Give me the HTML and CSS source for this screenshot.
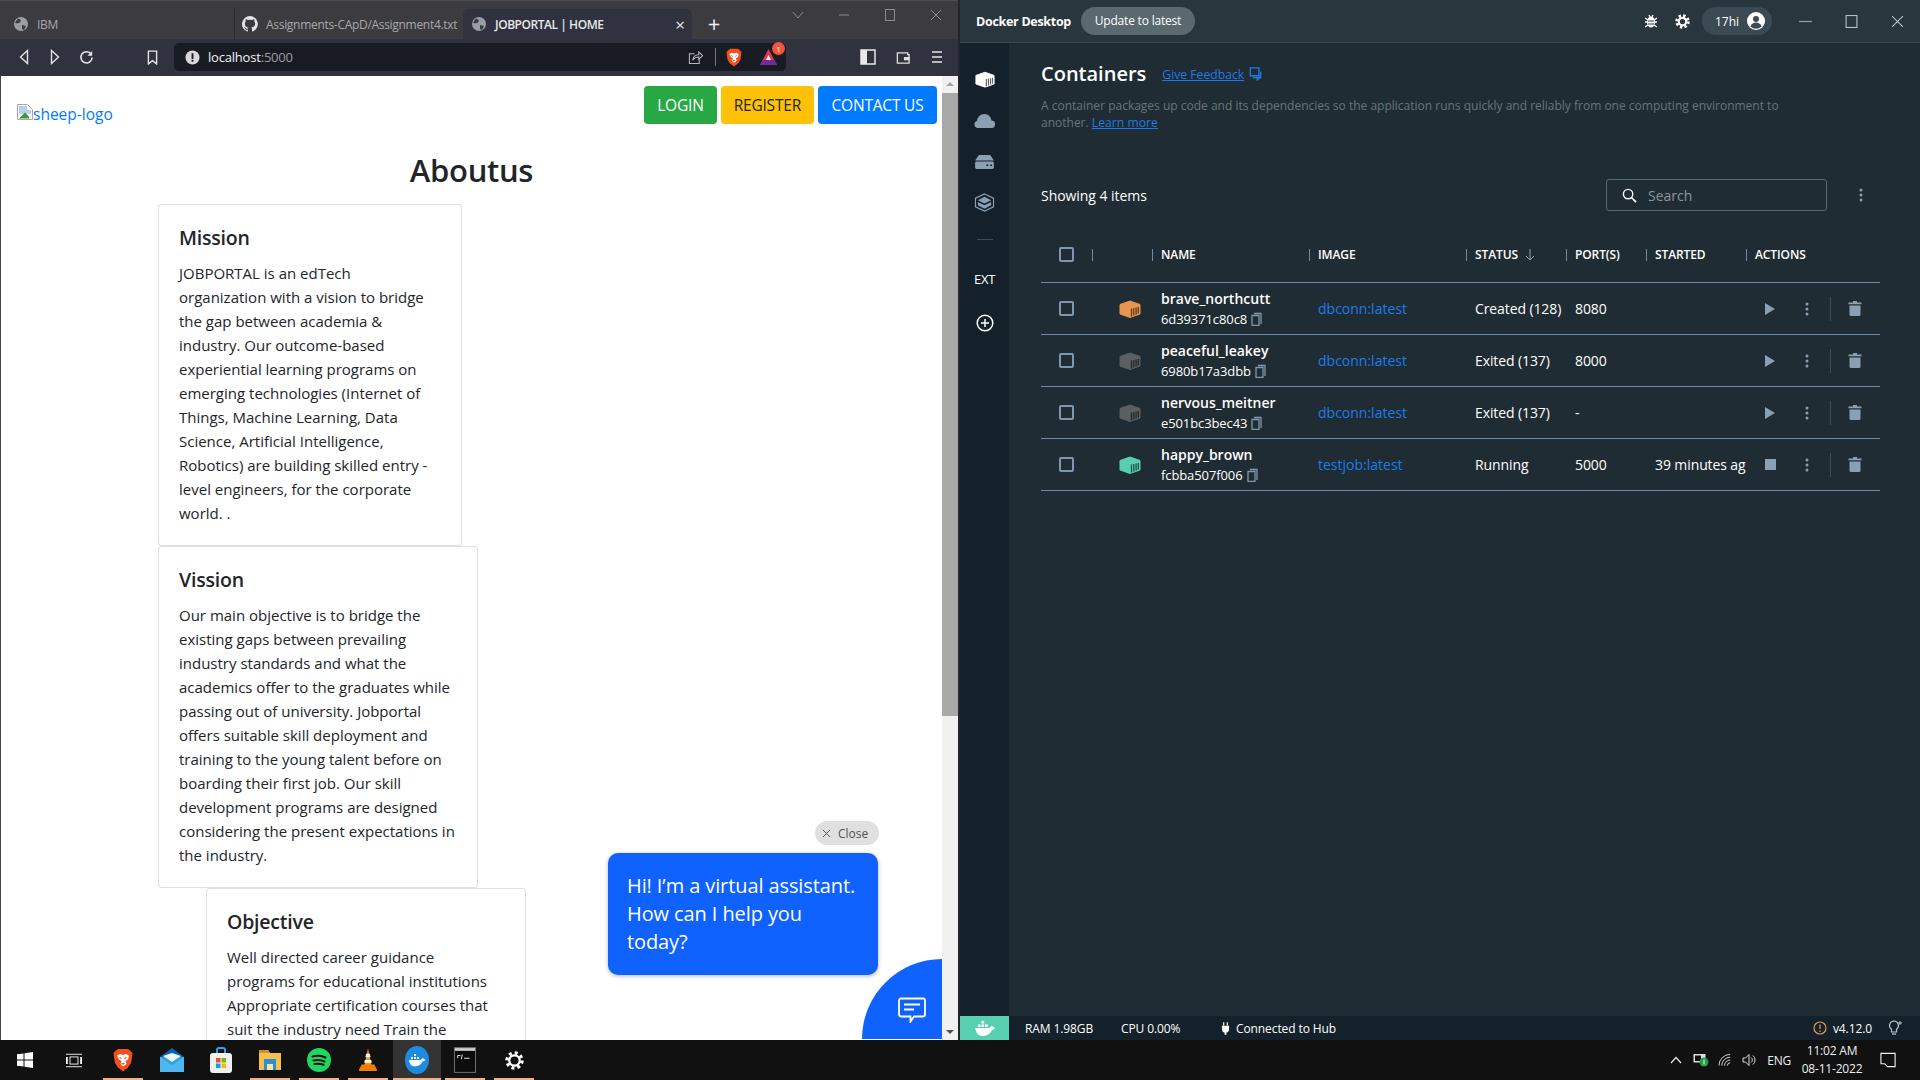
FILE: index.html
```html
<!DOCTYPE html>
<html lang="en">
<head>
<meta charset="utf-8">
<title>Desktop</title>
<link rel="stylesheet" href="styles.css">
</head>
<body>
<svg class="defs" width="0" height="0" aria-hidden="true">
  <symbol id="cube" viewBox="0 0 22 18"><polygon points="11,1 21,4.500 21,14 11,17.500 1,14 1,4.500" fill="currentColor" stroke="currentColor" stroke-width="1" stroke-linejoin="round"/><path d="M12.500 8.500v8M14.800 8v7.500M17.100 7.500v7M19.300 7v6.500" stroke="#000" stroke-opacity=".6" stroke-width="1.300"/></symbol>
  <symbol id="copy" viewBox="0 0 11 14"><path d="M3 1.500h7v10.500M1 3.500h7v10H1z" fill="none" stroke="#7f97ad" stroke-width="1.300"/></symbol>
  <symbol id="trash" viewBox="0 0 14 15"><path d="M5 0h4v1.500h4.500v1.800H.5V1.500H5zM1.500 4.500h11V13.500a1.500 1.500 0 0 1-1.500 1.500H3a1.500 1.500 0 0 1-1.500-1.500z" fill="#8ba0b3"/></symbol>
  <symbol id="play" viewBox="0 0 10 12"><polygon points="0,0 10,6 0,12" fill="#8ba0b3"/></symbol>
  <symbol id="kebab" viewBox="0 0 4 14"><circle cx="2" cy="2" r="1.500" fill="#8ba0b3"/><circle cx="2" cy="7" r="1.500" fill="#8ba0b3"/><circle cx="2" cy="12" r="1.500" fill="#8ba0b3"/></symbol>
  <symbol id="globe" viewBox="0 0 16 16"><circle cx="8" cy="8" r="7" fill="#9a9da3"/><path d="M5 2.500l3 1.500-1 2.500-3 1-2-1zM9 9l4 1-2 4-2-1z" fill="#3c3c41"/></symbol>
  <symbol id="whale" viewBox="0 0 24 18"><path d="M1 9h16.500c.5-2 2-2.500 3-2 .5 1 1.500 1.500 3 1.500-1 2-2.500 2.500-3.500 2.500C18.500 15 14.500 18 9.500 18 4 18 1.500 14 1 9z" fill="#fff"/><path d="M4 5h3v3H4zM8 5h3v3H8zM12 5h3v3h-3zM8 1h3v3H8z" fill="#fff"/></symbol>
  <symbol id="brave" viewBox="0 0 20 24"><path d="M5 1h10l2 1.500L19.500 5 19 9l-1 6-3 4.500L10 23.500 5 19.500 2 15 1 9 .5 5 3 2.500z" fill="#f1501d"/><path d="M4 7.500l3-1.500 3 1 3-1 3 1.500-1 4-2.500 1.500 1 3L10 18.500 7.500 16l1-3L6 11.500z" fill="#fff"/><path d="M8 15h4l-2 2z" fill="#f1501d"/><path d="M6.500 9.500l2 1M13.500 9.500l-2 1" stroke="#f1501d" stroke-width="1.200"/></symbol>
</svg>

<div class="desktop">
  <section class="browser">
    <div class="tabstrip">
      <div class="tab tab-ibm"><svg class="fav"><use href="#globe"/></svg><span>IBM</span></div>
      <div class="tab tab-gh">
        <svg class="fav" viewBox="0 0 16 16"><path fill="#e6e6e6" d="M8 0a8 8 0 0 0-2.500 15.600c.4.1.5-.2.500-.4v-1.400c-2.200.5-2.700-1-2.700-1-.4-.9-.9-1.200-.9-1.200-.7-.5.100-.5.100-.5.800.1 1.200.8 1.200.8.700 1.200 1.900.9 2.300.7.100-.5.300-.9.500-1.100-1.800-.2-3.600-.9-3.600-4 0-.9.300-1.600.8-2.100-.1-.2-.4-1 .1-2.100 0 0 .7-.2 2.200.8a7.600 7.600 0 0 1 4 0c1.500-1 2.200-.8 2.200-.8.400 1.100.2 1.900.1 2.100.5.600.8 1.300.8 2.100 0 3.100-1.900 3.700-3.700 3.900.3.300.6.800.6 1.500v2.200c0 .2.100.5.600.4A8 8 0 0 0 8 0z"/></svg>
        <span>Assignments-CApD/Assignment4.txt</span>
      </div>
      <div class="tab tab-active"><svg class="fav"><use href="#globe"/></svg><span>JOBPORTAL | HOME</span><b class="tab-x">×</b></div>
      <div class="tab-new">+</div>
      <div class="win-ctrl">
        <svg viewBox="0 0 12 8" class="wc wc-chev"><path d="M1 1l5 6 5-6" fill="none" stroke="#8b8b8f"/></svg>
        <svg viewBox="0 0 12 12" class="wc"><path d="M1 6h10" stroke="#8b8b8f"/></svg>
        <svg viewBox="0 0 12 12" class="wc"><rect x="1.500" y=".5" width="9" height="11" fill="none" stroke="#8b8b8f"/></svg>
        <svg viewBox="0 0 12 12" class="wc"><path d="M1 1l10 10M11 1L1 11" stroke="#8b8b8f"/></svg>
      </div>
    </div>
    <div class="toolbar">
      <div class="tb"><svg viewBox="0 0 10 16" width="10" height="16"><path d="M8.500 1.500L1.500 8l7 6.500z" fill="none" stroke="#e4e4e6" stroke-width="1.400"/></svg></div>
      <div class="tb tb-next"><svg viewBox="0 0 10 16" width="10" height="16"><path d="M1.500 1.500L8.500 8l-7 6.500z" fill="none" stroke="#e4e4e6" stroke-width="1.400"/></svg></div>
      <div class="tb tb-next"><svg viewBox="0 0 16 16" width="15" height="15"><path d="M13 4.500A6 6 0 1 0 14 8" fill="none" stroke="#e4e4e6" stroke-width="1.700"/><path d="M14 1v5H9z" fill="#e4e4e6"/></svg></div>
      <div class="tb tb-mark"><svg viewBox="0 0 12 16" width="11" height="15"><path d="M1.500 1h9v14L6 11.500 1.500 15z" fill="none" stroke="#e4e4e6" stroke-width="1.500"/></svg></div>
      <div class="address">
        <svg viewBox="0 0 16 16" width="15" height="15"><circle cx="8" cy="8" r="7.500" fill="#d8d8da"/><rect x="7" y="3.500" width="2" height="6" fill="#191b22"/><rect x="7" y="10.500" width="2" height="2" fill="#191b22"/></svg>
        <span class="url"><b>localhost</b>:5000</span>
        <svg class="addr-share" viewBox="0 0 16 16" width="15" height="15"><path d="M7 4H1.500v10.500H12V10M5 11c.5-4 3-6 6.500-6V2L15.500 6 11.500 10V7.500c-3 0-5 1-6.500 3.500z" fill="none" stroke="#b8b8bc" stroke-width="1.100"/></svg>
        <i class="addr-div"></i>
        <svg class="addr-brave" width="16" height="19"><use href="#brave"/></svg>
        <span class="addr-rew">
          <svg viewBox="0 0 18 18" width="19" height="18"><polygon points="9,1 17.500,17 .5,17" fill="#e8334a"/><polygon points="3.200,12 14.800,12 17.500,17 .5,17" fill="#6b2d9b"/><polygon points="9,7 11.500,12 6.500,12" fill="#fff"/></svg>
          <em class="badge">1</em>
        </span>
      </div>
      <div class="tb tb-side"><svg viewBox="0 0 16 16" width="16" height="16"><rect x="1" y="1" width="14" height="14" fill="none" stroke="#e8e8ea" stroke-width="1.500"/><rect x="1" y="1" width="6" height="14" fill="#e8e8ea"/></svg></div>
      <div class="tb tb-wallet"><svg viewBox="0 0 16 16" width="16" height="15"><path d="M2 3h11v2H14.500v9H2z" fill="none" stroke="#e0e0e2" stroke-width="1.400"/><rect x="9" y="7.500" width="6" height="3.500" fill="#e0e0e2"/></svg></div>
      <div class="tb tb-menu"><svg viewBox="0 0 12 14" width="12" height="14"><path d="M1 2h10M1 7h10M1 12h10" stroke="#e4e4e6" stroke-width="1.600"/></svg></div>
    </div>
    <div class="viewport">
      <div class="page">
        <nav class="site-nav">
          <a class="logo" href="#"><svg viewBox="0 0 16 16" width="16" height="16"><path d="M.5.500h10l5 5v10H.5z" fill="#fff" stroke="#a8a8a8"/><path d="M2 2h8v4h4v4H2z" fill="#b9cfee"/><path d="M2 14.500l6-6 4 4v2z" fill="#3f9a35"/></svg><span>sheep-logo</span></a>
          <div class="site-actions">
            <a class="btn btn-green" href="#">LOGIN</a>
            <a class="btn btn-yellow" href="#">REGISTER</a>
            <a class="btn btn-blue" href="#">CONTACT US</a>
          </div>
        </nav>
        <h1 class="about-title">Aboutus</h1>
        <article class="card card-mission">
          <h2>Mission</h2>
          <p>JOBPORTAL is an edTech<br>organization with a vision to bridge<br>the gap between academia &amp;<br>industry. Our outcome-based<br>experiential learning programs on<br>emerging technologies (Internet of<br>Things, Machine Learning, Data<br>Science, Artificial Intelligence,<br>Robotics) are building skilled entry -<br>level engineers, for the corporate<br>world. .</p>
        </article>
        <article class="card card-vision">
          <h2>Vission</h2>
          <p>Our main objective is to bridge the<br>existing gaps between prevailing<br>industry standards and what the<br>academics offer to the graduates while<br>passing out of university. Jobportal<br>offers suitable skill deployment and<br>training to the young talent before on<br>boarding their first job. Our skill<br>development programs are designed<br>considering the present expectations in<br>the industry.</p>
        </article>
        <article class="card card-objective">
          <h2>Objective</h2>
          <p>Well directed career guidance<br>programs for educational institutions<br>Appropriate certification courses that<br>suit the industry need Train the<br>trainers to meet the demand</p>
        </article>
        <div class="chat-close"><svg viewBox="0 0 10 10" width="9" height="9"><path d="M1 1l8 8M9 1L1 9" stroke="#444" stroke-width="1"/></svg><span>Close</span></div>
        <div class="chat-bubble">Hi! I’m a virtual assistant. How can I help you today?</div>
        <div class="chat-launcher"><svg viewBox="0 0 28 26" width="28" height="26"><path d="M3 1.500h22a2 2 0 0 1 2 2v14a2 2 0 0 1-2 2H16l-3.500 5v-5H3a2 2 0 0 1-2-2v-14a2 2 0 0 1 2-2z" fill="none" stroke="#fff" stroke-width="1.800"/><path d="M6 7.500h16M6 12.500h10" stroke="#fff" stroke-width="1.800"/></svg></div>
      </div>
      <div class="scrollbar">
        <span class="sb-arrow sb-up"></span>
        <span class="sb-thumb"></span>
        <span class="sb-arrow sb-down"></span>
      </div>
    </div>
  </section>

  <section class="docker">
    <header class="dk-top">
      <strong class="dk-brand">Docker Desktop</strong>
      <span class="dk-update">Update to latest</span>
      <svg class="dk-bug" viewBox="0 0 12 14" width="12" height="14"><ellipse cx="6" cy="8" rx="4" ry="5.500" fill="#fff"/><path d="M0 4l3 2M12 4L9 6M0 8h3M12 8H9M0 13l3-2M12 13l-3-2M4 1l1 2M8 1L7 3" stroke="#fff" stroke-width="1.300"/><path d="M3 7h6M3 10h6" stroke="#2a363e"/></svg>
      <svg class="dk-gear" viewBox="0 0 16 16" width="15" height="15"><circle cx="8" cy="8" r="6.200" fill="none" stroke="#fff" stroke-width="3" stroke-dasharray="2.500 2.370"/><circle cx="8" cy="8" r="4" fill="none" stroke="#fff" stroke-width="2.400"/></svg>
      <div class="dk-user"><span>17hi</span><svg viewBox="0 0 18 18" width="18" height="18"><circle cx="9" cy="9" r="9" fill="#fff"/><circle cx="9" cy="7" r="3" fill="#3c4a54"/><path d="M3.500 14.500c1-3 3-4 5.500-4s4.500 1 5.500 4a8 8 0 0 1-11 0z" fill="#3c4a54"/></svg></div>
      <div class="dk-win">
        <svg viewBox="0 0 12 12" width="13" height="13"><path d="M0 6h12" stroke="#8d9aa3" stroke-width="1.200"/></svg>
        <svg viewBox="0 0 12 12" width="13" height="13"><rect x="1" y=".5" width="10" height="11" fill="none" stroke="#b8c1c7"/></svg>
        <svg viewBox="0 0 12 12" width="13" height="13"><path d="M1 1l10 10M11 1L1 11" stroke="#b8c1c7"/></svg>
      </div>
    </header>
    <div class="dk-body">
      <aside class="dk-side">
        <div class="sd-slot"><svg viewBox="0 0 22 18" width="20" height="17" color="#fff"><use href="#cube"/></svg></div>
        <div class="sd-slot"><svg viewBox="0 0 22 16" width="21" height="15"><path d="M4 16a4 4 0 0 1-1-7.800C3.500 4 6.500 1 11 1c4 0 7 3 7.500 7A4 4 0 0 1 18 16z" fill="#8ba0b3"/></svg></div>
        <div class="sd-slot"><svg viewBox="0 0 22 16" width="21" height="15"><path d="M5 1h12l4 6H1z" fill="#8ba0b3"/><rect x="1" y="8" width="20" height="8" rx="1.500" fill="#8ba0b3"/><path d="M13 12h2M17 12h2" stroke="#14212a" stroke-width="1.500"/></svg></div>
        <div class="sd-slot"><svg viewBox="0 0 22 20" width="21" height="19"><path d="M11 1l9.500 4.500v9L11 19l-9.500-4.500v-9z" fill="none" stroke="#8ba0b3" stroke-width="1.200"/><path d="M11 4l7 3.500-7 3.500-7-3.500z" fill="#8ba0b3"/><path d="M4 9.500l7 3.500 7-3.500v3.500l-7 3.500-7-3.500z" fill="#8ba0b3"/></svg></div>
        <i class="sd-div"></i>
        <span class="sd-ext">EXT</span>
        <svg class="sd-plus" viewBox="0 0 18 18" width="18" height="18"><circle cx="9" cy="9" r="7.800" fill="none" stroke="#fff" stroke-width="1.500"/><path d="M9 5v8M5 9h8" stroke="#fff" stroke-width="1.500"/></svg>
      </aside>
      <main class="dk-main">
        <div class="dk-title-row">
          <h1>Containers</h1>
          <a class="dk-link" href="#">Give Feedback</a>
          <svg viewBox="0 0 16 16" width="15" height="14"><path d="M2 1h10v9H2z" fill="none" stroke="#1d7be8" stroke-width="1.500"/><path d="M5 12h9V5M10 12v3l3-3" fill="none" stroke="#1d7be8" stroke-width="1.500"/></svg>
        </div>
        <p class="dk-desc">A container packages up code and its dependencies so the application runs quickly and reliably from one computing environment to<br>another. <a class="dk-link" href="#">Learn more</a></p>
        <div class="dk-tools">
          <span class="dk-count">Showing 4 items</span>
          <div class="dk-search"><svg viewBox="0 0 16 16" width="15" height="15"><circle cx="6.500" cy="6.500" r="5" fill="none" stroke="#fff" stroke-width="1.500"/><path d="M10 10l5 5" stroke="#fff" stroke-width="1.800"/></svg><span>Search</span></div>
          <svg class="dk-more" width="4" height="14"><use href="#kebab"/></svg>
        </div>
        <div class="t-row t-head">
          <div class="t-check"><i class="cb"></i></div>
          <div class="t-cell"></div>
          <div class="t-cell">NAME</div>
          <div class="t-cell">IMAGE</div>
          <div class="t-cell t-sort">STATUS <svg viewBox="0 0 10 12" width="10" height="12"><path d="M5 0v11M1 7l4 4 4-4" fill="none" stroke="#8ba0b3"/></svg></div>
          <div class="t-cell">PORT(S)</div>
          <div class="t-cell">STARTED</div>
          <div class="t-cell">ACTIONS</div>
        </div>

        <div class="t-row">
          <div class="t-check"><i class="cb"></i></div>
          <div class="t-icon"><svg class="st-created" width="22" height="18"><use href="#cube"/></svg></div>
          <div class="t-name"><b>brave_northcutt</b><span>6d39371c80c8<svg width="11" height="14"><use href="#copy"/></svg></span></div>
          <div class="t-image"><a href="#">dbconn:latest</a></div>
          <div class="t-text">Created (128)</div>
          <div class="t-text">8080</div>
          <div class="t-text t-started"></div>
          <div class="t-actions"><span class="act"><svg width="10" height="12"><use href="#play"/></svg></span><span class="act act-more"><svg width="4" height="14"><use href="#kebab"/></svg></span><i class="act-div"></i><span class="act act-del"><svg width="14" height="15"><use href="#trash"/></svg></span></div>
        </div>
        <div class="t-row">
          <div class="t-check"><i class="cb"></i></div>
          <div class="t-icon"><svg class="st-exited" width="22" height="18"><use href="#cube"/></svg></div>
          <div class="t-name"><b>peaceful_leakey</b><span>6980b17a3dbb<svg width="11" height="14"><use href="#copy"/></svg></span></div>
          <div class="t-image"><a href="#">dbconn:latest</a></div>
          <div class="t-text">Exited (137)</div>
          <div class="t-text">8000</div>
          <div class="t-text t-started"></div>
          <div class="t-actions"><span class="act"><svg width="10" height="12"><use href="#play"/></svg></span><span class="act act-more"><svg width="4" height="14"><use href="#kebab"/></svg></span><i class="act-div"></i><span class="act act-del"><svg width="14" height="15"><use href="#trash"/></svg></span></div>
        </div>
        <div class="t-row">
          <div class="t-check"><i class="cb"></i></div>
          <div class="t-icon"><svg class="st-exited" width="22" height="18"><use href="#cube"/></svg></div>
          <div class="t-name"><b>nervous_meitner</b><span>e501bc3bec43<svg width="11" height="14"><use href="#copy"/></svg></span></div>
          <div class="t-image"><a href="#">dbconn:latest</a></div>
          <div class="t-text">Exited (137)</div>
          <div class="t-text">-</div>
          <div class="t-text t-started"></div>
          <div class="t-actions"><span class="act"><svg width="10" height="12"><use href="#play"/></svg></span><span class="act act-more"><svg width="4" height="14"><use href="#kebab"/></svg></span><i class="act-div"></i><span class="act act-del"><svg width="14" height="15"><use href="#trash"/></svg></span></div>
        </div>
        <div class="t-row">
          <div class="t-check"><i class="cb"></i></div>
          <div class="t-icon"><svg class="st-running" width="22" height="18"><use href="#cube"/></svg></div>
          <div class="t-name"><b>happy_brown</b><span>fcbba507f006<svg width="11" height="14"><use href="#copy"/></svg></span></div>
          <div class="t-image"><a href="#">testjob:latest</a></div>
          <div class="t-text">Running</div>
          <div class="t-text">5000</div>
          <div class="t-text t-started">39 minutes ago</div>
          <div class="t-actions"><span class="act"><i class="stop"></i></span><span class="act act-more"><svg width="4" height="14"><use href="#kebab"/></svg></span><i class="act-div"></i><span class="act act-del"><svg width="14" height="15"><use href="#trash"/></svg></span></div>
        </div>
      </main>
    </div>
    <footer class="dk-status">
      <div class="dk-whale"><svg width="22" height="16"><use href="#whale"/></svg></div>
      <span class="s-ram">RAM 1.98GB</span>
      <span class="s-cpu">CPU 0.00%</span>
      <svg class="s-plug" viewBox="0 0 10 14" width="9" height="13"><path d="M3 0v4M7 0v4" stroke="#fff" stroke-width="1.300"/><path d="M1 4h8v4a4 4 0 0 1-3 3.500V14H4v-2.500A4 4 0 0 1 1 8z" fill="#fff"/></svg>
      <span class="s-hub">Connected to Hub</span>
      <svg class="s-info" viewBox="0 0 14 14" width="14" height="14"><circle cx="7" cy="7" r="6" fill="none" stroke="#e39a55" stroke-width="1.200"/><path d="M7 3.500v4.500M7 9.500v1.500" stroke="#e39a55" stroke-width="1.200"/></svg>
      <span class="s-ver">v4.12.0</span>
      <svg class="s-bulb" viewBox="0 0 14 16" width="14" height="16"><path d="M6 1a4.500 4.500 0 0 0-2.500 8.200V12h5V9.200A4.500 4.500 0 0 0 6 1z" fill="none" stroke="#b8c1c7" stroke-width="1.200"/><path d="M4 14h4" stroke="#b8c1c7" stroke-width="1.300"/><path d="M12 1v4M10 3h4" stroke="#b8c1c7"/></svg>
    </footer>
  </section>
</div>

<footer class="taskbar">
  <div class="tk tk-win"><svg viewBox="0 0 16 16" width="16" height="16"><path d="M0 2.300l6.500-.9v6.100H0zM7.500 1.300L16 0v7.500H7.500zM0 8.500h6.500v6.100L0 13.700zM7.500 8.500H16V16l-8.500-1.300z" fill="#fff"/></svg></div>
  <div class="tk"><svg viewBox="0 0 18 16" width="16" height="15"><path d="M0 1h18M0 15h18" stroke="#fff" stroke-width="1"/><rect x="4.500" y="4" width="9" height="8" fill="none" stroke="#fff"/><path d="M0 4h2v8H0zM16 4h2v8h-2z" fill="#fff"/></svg></div>
  <div class="tk tk-open"><svg width="20" height="24"><use href="#brave"/></svg></div>
  <div class="tk"><svg viewBox="0 0 24 24" width="24" height="24"><path d="M12 0l12 9v15H0V9z" fill="#0a62b0"/><path d="M0 9h24v15H0z" fill="#2aa0ea"/><path d="M0 9l12 8 12-8v15H0z" fill="#4fb6ef"/><path d="M3 8l9-3 9 3-9 6z" fill="#e9f3fa"/></svg></div>
  <div class="tk"><svg viewBox="0 0 22 26" width="22" height="26"><path d="M7 6V3a2 2 0 0 1 2-2h4a2 2 0 0 1 2 2v3" fill="none" stroke="#2aa3e6" stroke-width="2"/><rect x="0" y="6" width="22" height="20" rx="3" fill="#f0f0f0"/><rect x="6" y="11" width="4.500" height="4.500" fill="#f25022"/><rect x="11.500" y="11" width="4.500" height="4.500" fill="#7fba00"/><rect x="6" y="16.500" width="4.500" height="4.500" fill="#00a4ef"/><rect x="11.500" y="16.500" width="4.500" height="4.500" fill="#ffb900"/></svg></div>
  <div class="tk tk-open"><svg viewBox="0 0 22 20" width="22" height="20"><path d="M0 0h9l2 3h11v17H0z" fill="#f4c04e"/><path d="M0 0h9l2 3H0z" fill="#c9952a"/><path d="M5 9h12v11h-3v-6H8v6H5z" fill="#2c8fd6"/><rect x="8" y="14" width="6" height="6" fill="#ffe29a"/></svg></div>
  <div class="tk tk-open"><svg viewBox="0 0 24 24" width="24" height="24"><circle cx="12" cy="12" r="12" fill="#1ed760"/><path d="M5.500 8.500c4-1 9-1 13 1M6.500 12.500c3.500-.8 7.500-.6 11 1M7.500 16c3-.6 6-.4 9 .8" fill="none" stroke="#111" stroke-width="2" stroke-linecap="round"/></svg></div>
  <div class="tk tk-open"><svg viewBox="0 0 22 26" width="20" height="26"><polygon points="11,0 15,19 7,19" fill="#f7941d"/><path d="M9 6h4l.8 4H8.200zM7.500 13h7l.6 3H6.900z" fill="#fff"/><path d="M4 18h14l3 6a1 1 0 0 1-1 1H2a1 1 0 0 1-1-1z" fill="#ef7d00"/></svg></div>
  <div class="tk tk-open tk-current"><svg viewBox="0 0 24 28" width="24" height="28"><ellipse cx="12" cy="14" rx="12" ry="14" fill="#1d8ce0"/><path d="M4 14h12c.5-1.500 1.500-2 2.500-1.500.3.700 1 1 2 1-.7 1.500-2 1.800-2.800 1.800-1.200 3-4 5.200-7.700 5.200-3.800 0-5.700-3-6-6.500z" fill="#fff"/><path d="M6 11h2v2H6zM9 11h2v2H9zM12 11h2v2h-2zM9 8h2v2H9z" fill="#fff"/></svg></div>
  <div class="tk tk-open"><svg viewBox="0 0 24 28" width="22" height="26"><rect x=".5" y=".5" width="23" height="27" fill="#0c0c0c" stroke="#777"/><rect x="1" y="1" width="22" height="3" fill="#d0d0d0"/><path d="M4 9h3M4 9v3M9 8l-1 5M11 12h6" stroke="#ddd" stroke-width="1.100"/></svg></div>
  <div class="tk tk-open"><svg viewBox="0 0 20 20" width="19" height="19"><circle cx="10" cy="10" r="8" fill="none" stroke="#fff" stroke-width="3.400" stroke-dasharray="3.140 3.140"/><circle cx="10" cy="10" r="5.500" fill="none" stroke="#fff" stroke-width="2.400"/></svg></div>
  <div class="tray">
    <svg class="tray-up" viewBox="0 0 12 8" width="12" height="8"><path d="M1 7l5-5.500L11 7" fill="none" stroke="#e8e8e8" stroke-width="1.200"/></svg>
    <svg viewBox="0 0 16 14" width="16" height="14"><rect x=".5" y="1" width="12" height="8.500" fill="#ddd"/><rect x="2" y="2.500" width="6" height="5.500" fill="#111"/><circle cx="11" cy="9" r="4.500" fill="#1e9e4a"/><path d="M11 6.500v5" stroke="#fff"/></svg>
    <svg viewBox="0 0 16 14" width="15" height="14"><path d="M1 13A12 12 0 0 1 13 1M4 13a9 9 0 0 1 9-9M7 13a6 6 0 0 1 6-6M10 13a3 3 0 0 1 3-3" fill="none" stroke="#ddd"/></svg>
    <svg viewBox="0 0 14 14" width="14" height="14"><path d="M1 5h2.500L7 1.500v11L3.500 9H1z" fill="none" stroke="#ddd"/><path d="M9 4.500a3 3 0 0 1 0 5M11 2.500a6 6 0 0 1 0 9" fill="none" stroke="#ddd"/></svg>
    <span class="tray-lang">ENG</span>
    <div class="tray-clock"><span>11:02 AM</span><span>08-11-2022</span></div>
    <svg class="tray-note" viewBox="0 0 18 16" width="17" height="16"><path d="M1 1h15v14H8l-3-3H1z" fill="none" stroke="#eee" stroke-width="1.200"/></svg>
  </div>
</footer>
</body>
</html>
```

FILE: styles.css
```css
* { box-sizing: border-box; }
html, body { margin: 0; padding: 0; height: 1080px; width: 1920px; overflow: hidden; }
body { display: flex; flex-direction: column; font-family: "Open Sans", "Noto Sans", sans-serif; background: #111; }
.defs { position: absolute; }
a { text-decoration: none; }

.desktop { display: flex; height: 1040px; }

/* Browser */
.browser { width: 960px; display: flex; flex-direction: column; border-right: 2px solid #22262a; }
.tabstrip { height: 39px; background: #3b3b40; border-top: 1px solid #4c4c50; display: flex; align-items: flex-end; color: #a8a8ab; font-size: 12px; flex: none; }
.tab { height: 30px; display: flex; align-items: center; gap: 8px; flex: none; overflow: hidden; white-space: nowrap; }
.tab span { letter-spacing: -.3px; }
.fav { width: 16px; height: 16px; flex: none; }
.tab-ibm { width: 235px; padding-left: 13px; border-right: 1px solid #2c2c30; }
.tab-gh { width: 228px; padding-left: 7px; }
.tab-active { width: 229px; padding-left: 8px; background: #30333f; color: #e8e8ea; border-radius: 6px 6px 0 0; font-weight: 600; }
.tab-active span { letter-spacing: -.45px; }
.tab-x { margin-left: auto; margin-right: 7px; font-size: 17px; font-weight: 400; }
.tab-new { width: 44px; height: 30px; text-align: center; color: #f0f0f0; font-size: 22px; line-height: 28px; }
.win-ctrl { margin-left: auto; align-self: flex-start; display: flex; align-items: center; height: 28px; gap: 34px; padding-right: 16px; }
.wc { width: 12px; height: 12px; display: block; }

.toolbar { height: 37px; background: #30333f; display: flex; align-items: center; padding: 0 0 1px 12px; flex: none; }
.tb { width: 24px; height: 24px; display: flex; align-items: center; justify-content: center; flex: none; }
.tb-next { margin-left: 7px; }
.tb-mark { margin-left: 42px; }
.tb-side { margin-left: 70px; }
.tb-wallet { margin-left: 11px; }
.tb-menu { margin-left: 10px; }
.address { margin-left: 10px; width: 612px; height: 28px; background: #191b22; border-radius: 5px; display: flex; align-items: center; padding-left: 11px; padding-right: 8px; flex: none; }
.url { margin-left: 8px; color: #9a9ca2; font-size: 13px; letter-spacing: -.2px; }
.url b { color: #f2f2f2; font-weight: 400; }
.addr-share { margin-left: auto; }
.addr-div { width: 1px; height: 18px; background: #777; margin-left: 12px; }
.addr-brave { margin-left: 10px; }
.addr-rew { margin-left: 17px; position: relative; display: flex; }
.badge { position: absolute; top: -6px; right: -7px; width: 13px; height: 13px; border-radius: 50%; background: #f3553c; color: #fff; font: normal 8px/13px "Open Sans", sans-serif; text-align: center; }

.viewport { flex: 1; background: #fff; display: flex; min-height: 0; border-left: 1px solid #40444a; }
.page { flex: 1; position: relative; overflow: hidden; color: #212529; min-width: 0; }
.scrollbar { width: 16px; background: #f1f1f1; display: flex; flex-direction: column; flex: none; }
.sb-arrow { height: 17px; display: block; position: relative; flex: none; }
.sb-up::after, .sb-down::after { content: ""; position: absolute; left: 4px; border-left: 4px solid transparent; border-right: 4px solid transparent; }
.sb-up::after { top: 6px; border-bottom: 4px solid #a3a3a3; }
.sb-down::after { top: 7px; border-top: 4px solid #505050; }
.sb-thumb { height: 623px; background: #a8a8a8; display: block; margin-bottom: auto; }

.site-nav { display: flex; justify-content: space-between; align-items: flex-start; padding: 10px 5px 0 16px; height: 74px; }
.logo { display: flex; align-items: flex-start; margin-top: 16px; color: #007bff; font-size: 15.500px; line-height: 24px; }
.logo svg { margin-top: 2px; }
.site-actions { display: flex; gap: 4px; }
.btn { height: 38px; padding: 0 13px; display: flex; align-items: center; border-radius: 4px; font-size: 15.500px; letter-spacing: -.2px; color: #fff; }
.btn-green { background: #28a745; }
.btn-yellow { background: #ffc107; color: #212529; }
.btn-blue { background: #007bff; padding: 0 13.500px; }

.about-title { margin: 0 0 14px; height: 40px; font-size: 31px; line-height: 40px; font-weight: 600; text-align: center; color: #212529; letter-spacing: -.3px; }
.card { border: 1px solid rgba(0,0,0,.125); border-radius: 4px; padding: 20px; background: #fff; }
.card h2 { margin: 0 0 10px; font-size: 19.500px; line-height: 26px; font-weight: 600; letter-spacing: -.2px; }
.card p { margin: 0; font-size: 15px; line-height: 24px; white-space: nowrap; }
.card-mission { width: 304px; margin-left: 157px; height: 342px; }
.card-vision { width: 320px; margin-left: 157px; height: 342px; }
.card-objective { width: 320px; margin-left: 205px; }

.chat-close { position: absolute; left: 814px; top: 745px; width: 64px; height: 24px; background: #e0e0e0; border-radius: 12px; display: flex; align-items: center; gap: 7px; padding-left: 7px; font-size: 12px; color: #525252; }
.chat-bubble { position: absolute; left: 607px; top: 777px; width: 270px; height: 122px; background: #0f62fe; color: #fff; border-radius: 10px; padding: 19px 19px; font-size: 20px; line-height: 28px; box-shadow: 0 1px 4px rgba(0,0,0,.3); letter-spacing: -.1px; }
.chat-launcher { position: absolute; left: 861px; top: 883px; width: 80px; height: 80px; background: #0f62fe; border-top-left-radius: 80px; display: flex; align-items: flex-end; justify-content: center; padding: 0 0 16px 20px; }

/* Docker */
.docker { width: 960px; display: flex; flex-direction: column; background: #202c33; color: #fff; }
.dk-top { height: 43px; background: #2a363e; border-bottom: 1px solid #3b4850; display: flex; align-items: center; padding-left: 16px; flex: none; }
.dk-brand { font-size: 12.500px; font-weight: 700; letter-spacing: -.3px; }
.dk-update { margin-left: 10px; width: 114px; height: 28px; line-height: 28px; background: #5a6870; border-radius: 14px; text-align: center; font-size: 12px; letter-spacing: -.2px; }
.dk-bug { margin-left: 450px; }
.dk-gear { margin-left: 18px; }
.dk-user { margin-left: 12px; width: 70px; height: 28px; background: #3c4a54; border-radius: 14px; display: flex; align-items: center; gap: 8px; padding-left: 13px; font-size: 12px; }
.dk-win { margin-left: 27px; display: flex; gap: 33px; align-items: center; }

.dk-body { flex: 1; display: flex; min-height: 0; }
.dk-side { width: 49px; background: #14212a; display: flex; flex-direction: column; align-items: center; flex: none; padding-top: 16px; }
.sd-slot { height: 41px; display: flex; align-items: center; flex: none; }
.sd-div { width: 16px; height: 1px; background: #3d4c57; margin-top: 16px; flex: none; }
.sd-ext { margin-top: 30px; font-size: 13px; line-height: 18px; letter-spacing: -.3px; }
.sd-plus { margin-top: 26px; flex: none; }

.dk-main { flex: 1; padding: 0 40px 0 32px; min-width: 0; }
.dk-title-row { display: flex; align-items: center; height: 30px; margin-top: 16px; }
.dk-title-row h1 { margin: 0 16px 0 0; font-size: 20px; font-weight: 600; line-height: 30px; }
.dk-title-row svg { margin-left: 4px; }
.dk-link { color: #1d7be8; font-size: 12.200px; text-decoration: underline; }
.dk-desc { margin: 8px 0 0; color: #68747c; font-size: 12px; line-height: 17px; }
.dk-tools { display: flex; align-items: center; height: 32px; margin-top: 48px; }
.dk-count { font-size: 14px; letter-spacing: -.05px; }
.dk-search { margin-left: auto; width: 221px; height: 32px; border: 1px solid #5a6870; border-radius: 3px; display: flex; align-items: center; gap: 11px; padding-left: 15px; color: #8a969e; font-size: 14px; }
.dk-more { margin-left: 32px; margin-right: 17px; }

.t-row { display: grid; grid-template-columns: 51px 60px 157px 157px 100px 80px 100px 134px; height: 52px; border-bottom: 1px solid #6f8aa5; align-items: center; font-size: 14px; }
.t-head { height: 54px; margin-top: 18px; font-size: 12px; font-weight: 600; padding-bottom: 2px; }
.t-cell { display: flex; align-items: center; gap: 4px; height: 12px; padding-left: 8px; border-left: 1px solid #6f8aa5; letter-spacing: -.1px; white-space: nowrap; line-height: 12px; }
.t-sort { gap: 7px; }
.t-check { display: flex; align-items: center; padding-left: 18px; height: 100%; }
.cb { display: block; width: 15px; height: 15px; border: 2px solid #7f97ad; border-radius: 2px; }
.t-icon { display: flex; padding-left: 27px; }
.st-created { color: #e8964f; }
.st-exited { color: #5b5f62; }
.st-running { color: #58d0b0; }
.t-name { padding-left: 9px; white-space: nowrap; display: flex; flex-direction: column; }
.t-name b { font-size: 14px; line-height: 20px; font-weight: 600; }
.t-name span { font-size: 13px; line-height: 20px; display: flex; align-items: center; gap: 4px; letter-spacing: -.1px; }
.t-image { padding-left: 9px; }
.t-image a { color: #1d7be8; font-size: 14px; }
.t-text { padding-left: 9px; white-space: nowrap; letter-spacing: -.1px; }
.t-started { overflow: hidden; height: 24px; line-height: 24px; }
.t-actions { display: flex; align-items: center; padding-left: 12px; }
.act { width: 24px; display: flex; justify-content: center; align-items: center; height: 24px; }
.act-more { margin-left: 13px; }
.act-del { margin-left: 12px; }
.act-div { width: 1px; height: 24px; background: #3d4c57; margin-left: 11px; }
.stop { display: block; width: 11px; height: 11px; background: #8ba0b3; }

.dk-status { height: 24px; background: #14212a; display: flex; align-items: center; font-size: 12px; letter-spacing: -.1px; flex: none; }
.dk-whale { width: 49px; height: 24px; background: #58d0b0; display: flex; align-items: center; justify-content: center; }
.s-ram { margin-left: 16px; width: 96px; }
.s-cpu { width: 100px; }
.s-hub { margin-left: 6px; }
.s-info { margin-left: auto; }
.s-ver { margin-left: 6px; }
.s-bulb { margin-left: 16px; margin-right: 18px; }

/* Taskbar */
.taskbar { height: 40px; background: #111; display: flex; align-items: stretch; flex: none; color: #eee; padding-left: 4px; }
.tk { width: 40px; margin-right: 9px; display: flex; align-items: center; justify-content: center; position: relative; flex: none; }
.tk-win { margin-left: 1px; }
.tk-open::after { content: ""; position: absolute; left: 0; right: 0; bottom: 0; height: 2px; background: #f5b183; }
.tk-current { background: #333; width: 48px; margin: 0 4px 0 -4px; }
.tray { margin-left: auto; display: flex; align-items: center; padding-right: 23px; }
.tray svg { margin-right: 9px; flex: none; }
.tray .tray-up { margin-right: 11px; }
.tray-lang { font-size: 12px; letter-spacing: -.2px; white-space: nowrap; margin-left: 2px; }
.tray-clock { display: flex; flex-direction: column; align-items: center; margin-left: 9px; font-size: 12px; line-height: 18px; letter-spacing: -.2px; width: 64px; white-space: nowrap; }
.tray .tray-note { margin: 0 0 0 16px; }
```
